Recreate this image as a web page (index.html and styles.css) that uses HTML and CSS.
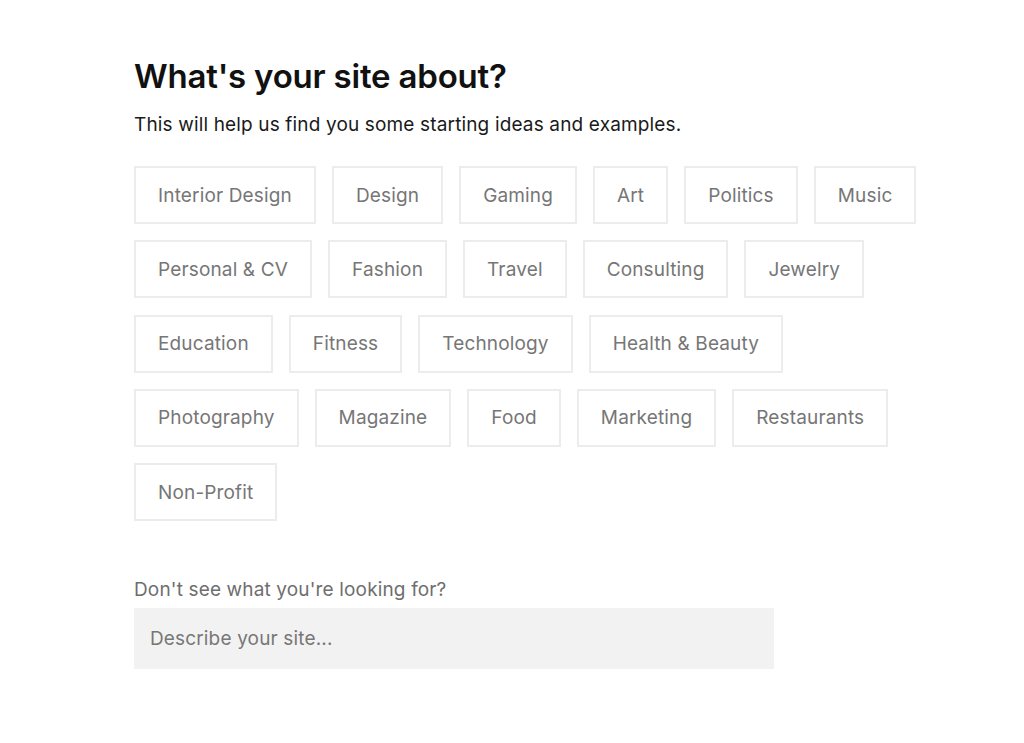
FILE: index.html
```html
<!DOCTYPE html>
<html lang="en">
<head>
<meta charset="utf-8">
<title>What's your site about?</title>
<link rel="stylesheet" href="styles.css">
</head>
<body>
<main class="page">
  <h1 class="title">What's your site about?</h1>
  <p class="subtitle">This will help us find you some starting ideas and examples.</p>
  <div class="chips">
    <button class="chip">Interior Design</button>
    <button class="chip">Design</button>
    <button class="chip">Gaming</button>
    <button class="chip">Art</button>
    <button class="chip">Politics</button>
    <button class="chip">Music</button>
    <button class="chip">Personal &amp; CV</button>
    <button class="chip">Fashion</button>
    <button class="chip">Travel</button>
    <button class="chip">Consulting</button>
    <button class="chip">Jewelry</button>
    <button class="chip">Education</button>
    <button class="chip">Fitness</button>
    <button class="chip">Technology</button>
    <button class="chip">Health &amp; Beauty</button>
    <button class="chip">Photography</button>
    <button class="chip">Magazine</button>
    <button class="chip">Food</button>
    <button class="chip">Marketing</button>
    <button class="chip">Restaurants</button>
    <button class="chip">Non-Profit</button>
  </div>
  <label class="label" for="describe">Don't see what you're looking for?</label>
  <input id="describe" class="input" type="text" placeholder="Describe your site...">
</main>
</body>
</html>
```

FILE: styles.css
```css
* { box-sizing: border-box; }
html, body { margin: 0; padding: 0; background: #fff; }
body { font-family: Inter, "Noto Sans", sans-serif; color: #111; }
.page {
  width: 820px;
  padding: 56px 0 0 134px;
  display: flex;
  flex-direction: column;
  align-items: flex-start;
}
.title {
  margin: 0;
  font-size: 33px;
  font-weight: 600;
  letter-spacing: -0.2px;
  line-height: 40px;
  color: #111;
}
.subtitle {
  margin: 16px 0 0;
  font-size: 19px;
  letter-spacing: 0.15px;
  line-height: 26px;
  color: #1a1a1a;
}
.chips {
  margin-top: 28px;
  display: flex;
  flex-wrap: wrap;
  gap: 16.3px 16px;
  width: 820px;
}
.chip {
  height: 58px;
  padding: 0 22px;
  border: 2px solid #ececec;
  background: #fff;
  font-family: inherit;
  font-size: 19px;
  letter-spacing: 0.15px;
  color: #767676;
  cursor: pointer;
}
.label {
  margin-top: 57px;
  font-size: 19px;
  letter-spacing: 0.15px;
  line-height: 24px;
  color: #6e6e6e;
}
.input {
  margin-top: 6px;
  width: 640px;
  height: 61px;
  border: none;
  background: #f2f2f2;
  padding: 0 16px;
  font-family: inherit;
  font-size: 19px;
  letter-spacing: 0.15px;
  color: #333;
  outline: none;
}
.input::placeholder { color: #777; }
```
